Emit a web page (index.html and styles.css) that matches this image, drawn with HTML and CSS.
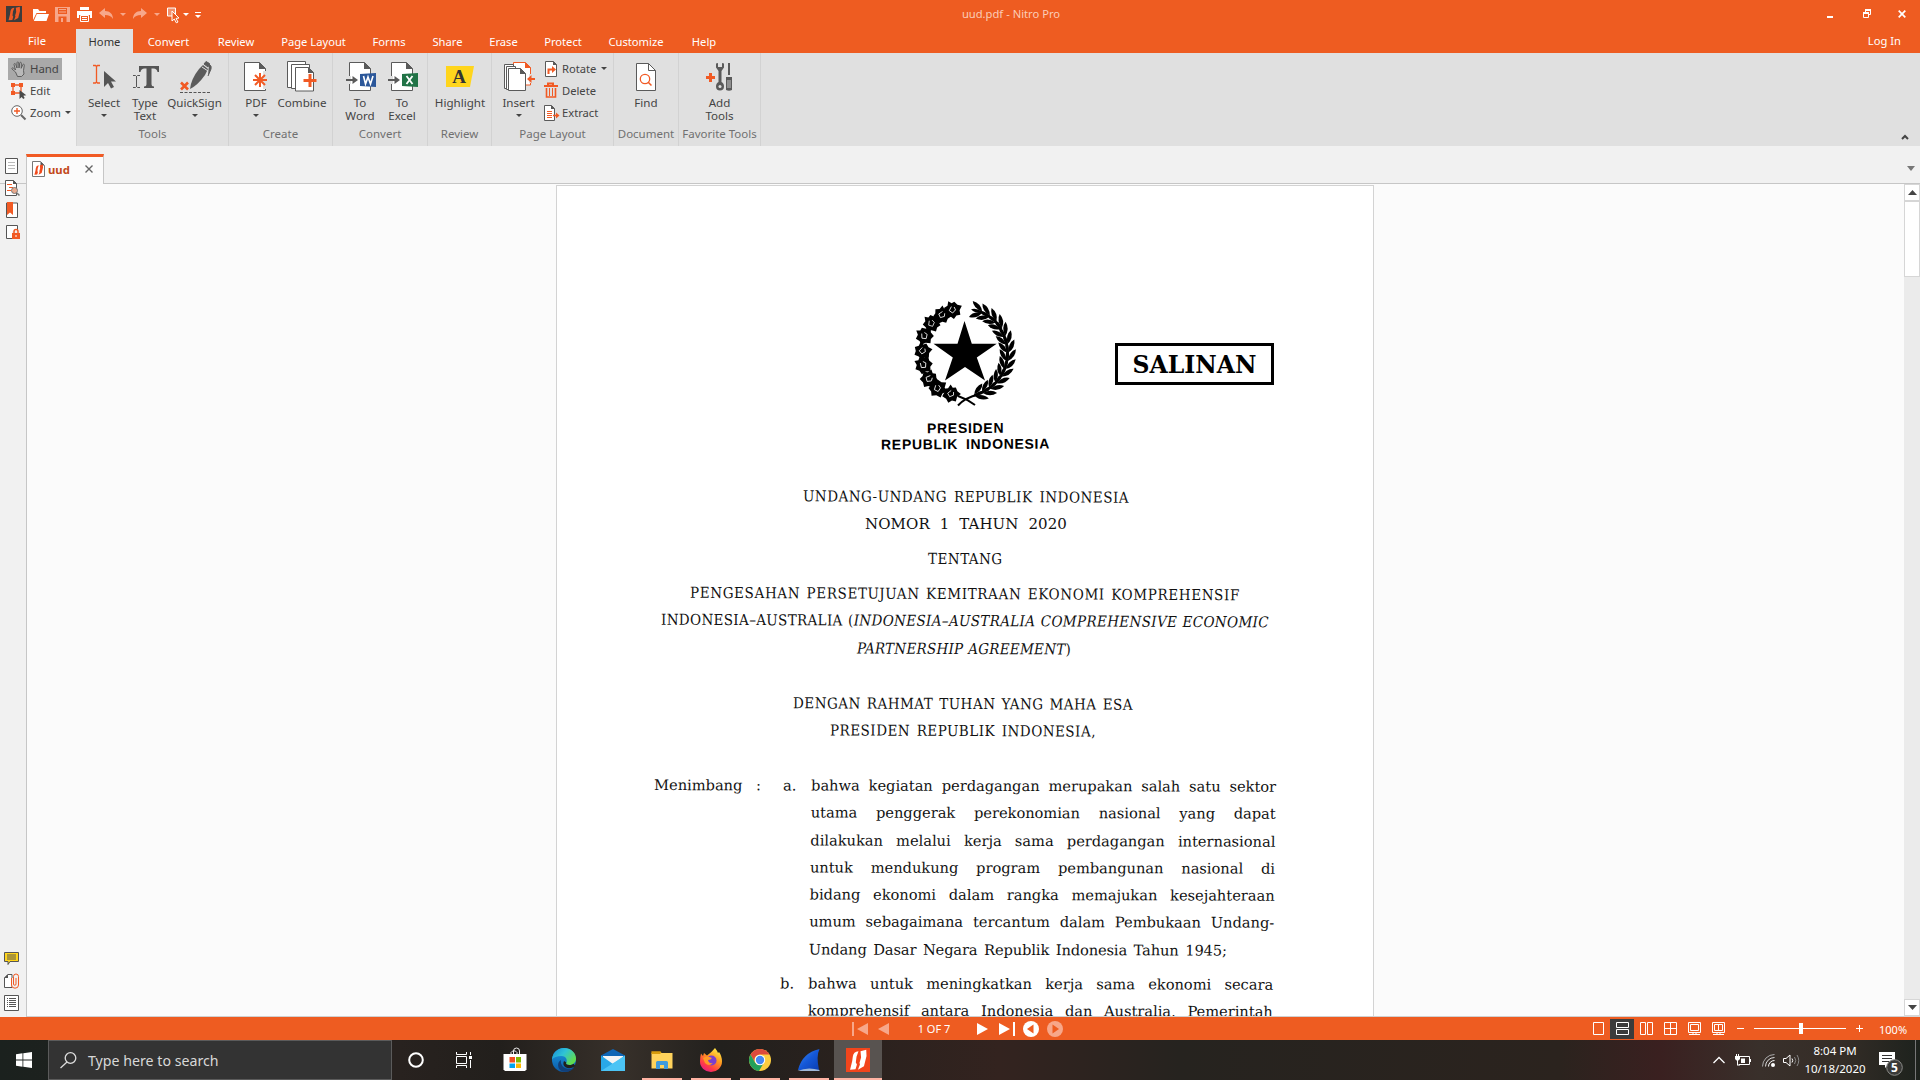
FILE: index.html
```html
<!DOCTYPE html>
<html lang="en">
<head>
<meta charset="utf-8">
<title>uud.pdf - Nitro Pro</title>
<link rel="stylesheet" href="styles.css">
</head>
<body>
<svg class="defs" width="0" height="0">
  <defs>
    <linearGradient id="edgeA" x1="0" y1="0" x2="1" y2=".6"><stop offset="0" stop-color="#1689d8"/><stop offset=".5" stop-color="#2fc3d6"/><stop offset="1" stop-color="#62dc4c"/></linearGradient>
    <linearGradient id="edgeB" x1="0" y1="0" x2="0" y2="1"><stop offset="0" stop-color="#1b9be4"/><stop offset="1" stop-color="#0c59a4"/></linearGradient>
    <linearGradient id="fox" x1=".8" y1="0" x2=".2" y2="1"><stop offset="0" stop-color="#fff04a"/><stop offset=".4" stop-color="#ff9a1f"/><stop offset=".75" stop-color="#ff3b47"/><stop offset="1" stop-color="#e2188c"/></linearGradient>
    <linearGradient id="fin" x1="0" y1="0" x2="1" y2="1"><stop offset="0" stop-color="#3f8cf0"/><stop offset=".5" stop-color="#1458d8"/><stop offset="1" stop-color="#0b3db0"/></linearGradient>
    <g id="nitro"><path d="M8.400 1.800Q4.800 2 4.400 5.500L4 8.500 2.500 14.300 6.300 14 7.300 10.800 6.500 9.500 7 5.500z"/><path d="M9.800 1.800 13.800.800 14 5 12.200 12 8 14.300 9.400 10.800 9.100 9.600 10.200 6z"/></g>
    <g id="rose"><path d="M-1-7.500 2.500-6 6.500-6.500 6-2 8 1.500 5 3.500 4 7.200 0 6-4 7-5 3.500-7.800 1-5.500-2-6.200-6-2.800-5.300z"/><path d="M-2-2.500-2.500 1.500 1 2.500 2.500-1 .5-3" fill="none" stroke="#fff" stroke-width=".7"/></g>
    <g id="grain"><path d="M.5 6.500Q8.300 3 8.300-5.500 1.500-3 .5 6.500z"/><path d="M-.8 6.500Q-8 3-8-5-1.500-3-.8 6.500z"/><path d="M-1 7Q-3-1 0-5 3-1 .7 7z"/></g>
  </defs>
</svg>

<header class="titlebar">
  <div class="quick">
    <svg class="app" width="16" height="16"><rect width="16" height="16" fill="#3d3c3c"/><use href="#nitro" fill="#f15a24"/></svg>
    <svg class="q-open" width="16" height="14"><path d="M0 12V1h5l1.500 2H13v2H3.500z" fill="#fff"/><path d="M3.800 6H16l-2.500 7H.8z" fill="#fff"/></svg>
    <svg class="q-save" width="15" height="15"><path d="M0 0h15v15H0z" fill="#f7a78a"/><path d="M3 1h9v6H3zM3.500 9.500h8V15h-8z" fill="#ee5c21"/><path d="M4 2h7v1H4zM4 4.500h7v1H4zM6 11h2v4H6z" fill="#f7a78a"/></svg>
    <svg class="q-print" width="15" height="15"><path d="M3 0h9v3H3zM0 4h15v7h-2V8H2v3H0z" fill="#fff"/><path d="M3.500 8.500h8v6h-8z" fill="#ee5c21" stroke="#fff"/><path d="M5 10.500h5M5 12.500h5" stroke="#fff"/></svg>
    <svg class="q-undo" width="15" height="12"><path d="M6 0v3c5 0 8 3 8 8-2-3-4-4-8-4v3L0 5z" fill="#f7a78a"/></svg>
    <i class="dn faded q-a1"></i>
    <svg class="q-redo" width="15" height="12"><path d="M9 0v3C4 3 1 6 1 11c2-3 4-4 8-4v3l6-5z" fill="#f7a78a"/></svg>
    <i class="dn faded q-a2"></i>
    <svg class="q-cur" width="13" height="17"><path d="M.5 1h8v8h-8z" fill="#f2906b" stroke="#fff"/><path d="M5 4v10l2.300-2 2 3.800 1.700-.8-2-3.600 3-.4z" fill="#ee5c21" stroke="#fff"/></svg>
    <i class="dn white q-a3"></i>
    <svg class="q-more" width="6" height="6"><path d="M0 0h6v1H0zM0 3h6L3 6z" fill="#fff"/></svg>
  </div>
  <div class="caption">uud.pdf - Nitro Pro</div>
  <div class="winbtns">
    <svg width="6" height="10"><path d="M0 7h6v2H0z" fill="#fff"/></svg>
    <svg width="8" height="9"><path d="M2.500 3V1h5v4.500H6" fill="none" stroke="#fff"/><path d="M2 0h6v2H2z" fill="#fff"/><path d="M.5 4h5v4.500h-5z" fill="none" stroke="#fff"/><path d="M0 3h6v2H0z" fill="#fff"/></svg>
    <svg width="8" height="8"><path d="M.7.700l6.600 6.600M7.300.700.7 7.300" stroke="#fff" stroke-width="1.700"/></svg>
  </div>
</header>

<nav class="menu">
  <span class="file">File</span><span class="on">Home</span><span>Convert</span><span>Review</span><span>Page Layout</span><span>Forms</span><span>Share</span><span>Erase</span><span>Protect</span><span>Customize</span><span>Help</span>
  <span class="login">Log In</span>
</nav>

<section class="ribbon">
  <div class="modes">
    <div class="mode sel"><svg width="16" height="16"><path d="M4.500 11 1 8c-.5-1 .6-1.600 1.500-1L4.500 9 3 3.500C3 2.300 4.300 2.200 4.700 3.300L6 7V1.800C6 .600 7.600.600 7.700 1.800L8 7l.8-5C9 1 10.300 1 10.400 2.200L10.200 7.300l1.600-3.600c.5-1 1.700-.5 1.500.5L12.500 9.500 13 13l-2.500 2.500h-4z" fill="#b9b9b9" stroke="#555" stroke-width=".9"/></svg>Hand</div>
    <div class="mode"><svg width="16" height="16"><path d="M2 2h8v8H2z" fill="none" stroke="#f15a24" stroke-width="1.300"/><path d="M0 0h4v4H0zM8 0h4v4H8zM0 8h4v4H0z" fill="#f15a24"/><path d="M8.500 7v9l2.200-2 1.500 2 1.500-1-1.400-2.200 3-.5z" fill="#4a4a4a"/></svg>Edit</div>
    <div class="mode"><svg width="16" height="16"><circle cx="6" cy="6" r="5.300" fill="#fff" stroke="#666"/><path d="M10 10l4.500 4.500" stroke="#666" stroke-width="2"/><path d="M6 3v6M3 6h6" stroke="#f15a24" stroke-width="1.400"/></svg>Zoom<i class="dn"></i></div>
  </div>

  <div class="group g-tools"><div class="btns">
    <div class="btn"><svg width="48" height="36"><path d="M13 7.500h2.500l1 1 1-1H20M13 25h2.500l1-1 1 1H20M16.500 8v16.500" stroke="#f15a24" fill="none" stroke-width="1.300"/><path d="M24 13v16l4-4 3 5.500 3-1.500-3-5.500h5z" fill="#555"/></svg><b>Select</b><i class="dn"></i></div>
    <div class="btn"><svg width="48" height="36"><path d="M18 8h20v6h-1.500q-.5-3.500-4-3.500h-2V26q0 2.500 2.500 2.500V30H23v-1.500q2.500 0 2.500-2.500V10.500h-2q-3.500 0-4 3.500H18z" fill="#555"/><path d="M12 17.500h2.500l1 1 1-1H19M12 29.500h2.500l1-1 1 1H19M15.500 18v11" stroke="#555" fill="none"/></svg><b>Type<br>Text</b></div>
    <div class="btn"><svg width="48" height="36"><path d="M19 31Q20 21 28 11l4-4 5 4-3 6Q27 27 19 31z" fill="#5b5b5b"/><path d="M33 6l2-2.500 3.500 2L37 9zM38 6q3 2 2 5l-3 7" fill="#5b5b5b" stroke="#5b5b5b"/><path d="M31 9l6 4" stroke="#e0e0e0"/><path d="M10 24.500l7 7M17 24.500l-7 7" stroke="#f15a24" stroke-width="2.600"/><path d="M9 34.500h31" stroke="#555" stroke-dasharray="3 1.500"/></svg><b>QuickSign</b><i class="dn"></i></div>
  </div><em>Tools</em></div>

  <div class="group g-create"><div class="btns">
    <div class="btn"><svg width="48" height="36"><path d="M12.500 4.500h15l6 6v22h-21z" fill="#fff" stroke="#5a5a5a"/><path d="M27 4v7h7z" fill="#5a5a5a"/><path d="M31 13h5v18h-5z" fill="#e0e0e0"/><path d="M28 15v14M21 22h14M23 17l10 10M33 17 23 27" stroke="#f15a24" stroke-width="2"/></svg><b>PDF</b><i class="dn"></i></div>
    <div class="btn"><svg width="48" height="36"><path d="M9.500 3.500h18v26h-18z" fill="#fff" stroke="#5a5a5a"/><path d="M13.500 6.500h18v24h-18z" fill="#fff" stroke="#5a5a5a"/><path d="M17.500 9.500h13l5 5v18.500h-18z" fill="#fff" stroke="#5a5a5a"/><path d="M30 9v6h6z" fill="#5a5a5a"/><path d="M32 16v13M25.500 22.500h13" stroke="#f15a24" stroke-width="3"/></svg><b>Combine</b></div>
  </div><em>Create</em></div>

  <div class="group g-convert"><div class="btns">
    <div class="btn"><svg width="48" height="36"><path d="M13.500 4.500h15l6 6v22h-21z" fill="#fff" stroke="#5a5a5a"/><path d="M28 4v7h7z" fill="#5a5a5a"/><path d="M12 18h3v8h-3z" fill="#e0e0e0"/><path d="M10 22h8" stroke="#5a5a5a" stroke-width="2"/><path d="M16.500 18v8l5.500-4z" fill="#5a5a5a"/><path d="M24 16l16-1v14l-16-1z" fill="#2b579a"/><path d="M27.500 18l2 8 2.500-7 2.500 7 2.500-8" fill="none" stroke="#fff" stroke-width="1.600"/></svg><b>To<br>Word</b></div>
    <div class="btn"><svg width="48" height="36"><path d="M13.500 4.500h15l6 6v22h-21z" fill="#fff" stroke="#5a5a5a"/><path d="M28 4v7h7z" fill="#5a5a5a"/><path d="M12 18h3v8h-3z" fill="#e0e0e0"/><path d="M10 22h8" stroke="#5a5a5a" stroke-width="2"/><path d="M16.500 18v8l5.500-4z" fill="#5a5a5a"/><path d="M24 16l16-1v14l-16-1z" fill="#217346"/><path d="M28.500 18l6 8M34.500 18l-6 8" fill="none" stroke="#fff" stroke-width="1.800"/></svg><b>To<br>Excel</b></div>
  </div><em>Convert</em></div>

  <div class="group g-review"><div class="btns">
    <div class="btn"><svg width="48" height="36"><path d="M10 8h28l-4 21H10z" fill="#ffd51c"/><text x="23" y="25" text-anchor="middle" class="hl">A</text></svg><b>Highlight</b></div>
  </div><em>Review</em></div>

  <div class="group g-page"><div class="btns">
    <div class="btn"><svg width="48" height="36"><path d="M18.500 16V4.500h12l5 5V27H28" fill="#fff" stroke="#f15a24"/><path d="M30 4v6h6z" fill="#f15a24"/><path d="M9.500 6.500h9v24h-9z" fill="#fff" stroke="#5a5a5a"/><path d="M11.500 8.500h9v23h-9z" fill="#fff" stroke="#5a5a5a"/><path d="M13.500 10.500h12l5 5v17h-17z" fill="#fff" stroke="#5a5a5a"/><path d="M25 10v6h6z" fill="#5a5a5a"/><path d="M34 16h4v9h-4z" fill="#e0e0e0"/><path d="M35 21h5" stroke="#f15a24" stroke-width="2"/><path d="M36.500 17v8L32 21z" fill="#f15a24"/></svg><b>Insert</b><i class="dn"></i></div>
    <div class="stack">
      <div><svg width="16" height="16"><path d="M2.500.500h8l3 3v12h-11z" fill="#fff" stroke="#5a5a5a"/><path d="M10 0v4h4z" fill="#5a5a5a"/><path d="M5.500 13V8.500H10" fill="none" stroke="#f15a24" stroke-width="2"/><path d="M9 5v7l4-3.500z" fill="#f15a24"/></svg>Rotate<i class="dn"></i></div>
      <div><svg width="16" height="16"><path d="M5 2V.500h5V2M1 3h14" fill="none" stroke="#f15a24" stroke-width="2"/><path d="M3.500 5v9h9V5" fill="none" stroke="#f15a24" stroke-width="1.600"/><path d="M6.500 5v8M9.500 5v8" stroke="#f15a24"/></svg>Delete</div>
      <div><svg width="16" height="16"><path d="M1.500.500h7l3 3v12h-10z" fill="#fff" stroke="#5a5a5a"/><path d="M8 0v4h4z" fill="#5a5a5a"/><path d="M4 6.500h5M4 8.500h5M4 10.500h5M4 12.500h5" stroke="#f15a24"/><path d="M10 10.500h4" stroke="#f15a24" stroke-width="1.600"/><path d="M13 7.500v6l3.500-3z" fill="#f15a24"/></svg>Extract</div>
    </div>
  </div><em>Page Layout</em></div>

  <div class="group g-doc"><div class="btns">
    <div class="btn"><svg width="48" height="36"><path d="M14.500 5.500h12l7 7v20h-19z" fill="#fff" stroke="#5a5a5a"/><path d="M26.500 5.500v7h7" fill="none" stroke="#5a5a5a"/><circle cx="23" cy="21" r="4.700" fill="none" stroke="#f15a24" stroke-width="1.300"/><path d="M26 24l3.500 3.500" stroke="#f15a24" stroke-width="1.500"/></svg><b>Find</b></div>
  </div><em>Document</em></div>

  <div class="group g-fav"><div class="btns">
    <div class="btn"><svg width="48" height="36"><path d="M10 19.500h9M14.500 15v9" stroke="#f15a24" stroke-width="3"/><path d="M20 5.500v4l2.500 3.500v11q-2.500 1-2.500 4.500 0 4 4 4t4-4q0-3.500-2.500-4.500V13L28 9.500v-4l-2-.5v4h-4V5z" fill="#5a5a5a"/><circle cx="24" cy="28.500" r="1.500" fill="#e0e0e0"/><path d="M32 5h2v12h-2z" fill="#5a5a5a"/><path d="M30 19h6v13q-3 1.500-6 0z" fill="#5a5a5a"/><path d="M32 22v8M34 22v8" stroke="#e0e0e0" stroke-width=".8"/></svg><b>Add<br>Tools</b></div>
  </div><em>Favorite Tools</em></div>
  <svg class="collapse" width="8" height="6"><path d="M1 5l3-3 3 3" fill="none" stroke="#444" stroke-width="2"/></svg>
</section>

<div class="tabstrip">
  <div class="doctab">
    <svg width="13" height="16"><path d="M.5.500h8l4 4v11H.5z" fill="#fff" stroke="#777"/><path d="M8.500.500v4h4z" fill="#555"/><use href="#nitro" transform="translate(.5 3) scale(.75 .75)" fill="#f04a1c"/></svg>
    <span>uud</span>
    <svg class="x" width="8" height="8"><path d="M.5.500l7 7M7.500.500l-7 7" stroke="#666" stroke-width="1.400"/></svg>
  </div>
  <i class="dn big"></i>
</div>

<main class="work">
  <aside class="side">
    <svg width="16" height="16"><path d="M1.500.500h12v15h-12z" fill="#fff" stroke="#555"/><path d="M4 4.500h7M4 7.500h7M4 10.500h7" stroke="#bbb"/></svg>
    <svg width="16" height="16"><path d="M1.500.500h8l3 3v12h-11z" fill="#fff" stroke="#555"/><path d="M9 0v4h4z" fill="#555"/><path d="M3 4.500h5M5 7.500h4M3 10.500h4" stroke="#f15a24" stroke-width="1.200"/><circle cx="10.500" cy="10.500" r="3" fill="#e8a98c" stroke="#777"/><path d="M13 13l2.500 2.500" stroke="#777" stroke-width="1.500"/></svg>
    <svg width="16" height="16"><path d="M2.500 1v14.500h11V1z" fill="#fff" stroke="#555"/><path d="M3 0h6v13l-3-2.500L3 13z" fill="#f15a24"/></svg>
    <svg width="16" height="16"><path d="M2.500 1.500h11v13h-11z" fill="#fff" stroke="#555"/><path d="M8 7h8v9H8z" fill="#f1f1f1"/><path d="M8 9h8v6H8z" fill="#f15a24"/><path d="M10 9V7.500a2 2 0 0 1 4 0V9" fill="none" stroke="#f15a24" stroke-width="1.500"/><path d="M12 11v2" stroke="#fff"/></svg>
    <svg class="lower" width="16" height="16"><path d="M.5 1.500h14v9H6l-2 3v-3H.5z" fill="#ffd51c" stroke="#555"/><path d="M3 4h9M3 6h9M3 8h9" stroke="#555"/></svg>
    <svg width="16" height="16"><path d="M.5 14.500V5L4 1.500h4v13z" fill="#fff" stroke="#555"/><path d="M0 5l4-4v4z" fill="#555"/><path d="M7.500 5v7a3.500 3.200 0 0 0 7 0V3.500a2.500 2.500 0 0 0-5 0V11a1.200 1.200 0 0 0 2.500 0V5" fill="#f1f1f1" stroke="#f15a24"/></svg>
    <svg width="16" height="16"><path d="M.5.500h14v15H.5z" fill="#fff" stroke="#555"/><path d="M3 3.500h1m1 0h7M3 5.500h1m1 0h7M3 7.500h1m1 0h7M3 9.500h1m1 0h7M3 11.500h1m1 0h7" stroke="#555"/></svg>
  </aside>
  <div class="canvas">
    <article class="page">
      <div class="crest">
        <svg width="102" height="105" viewBox="0 0 102 105">
          <path d="M49.500 19 56.800 41.800 81.700 41.800 61.800 55.500 70 78.500 50 65 30 78.500 37.800 55.500 18.500 41.800 42.500 41.800z"/>
          <use href="#rose" transform="translate(37.500 8) rotate(20) scale(1.120)"/><use href="#rose" transform="translate(26.800 13) rotate(50) scale(1.100)"/><use href="#rose" transform="translate(16.500 21.500) scale(1.120)"/><use href="#rose" transform="translate(9.500 34) rotate(-10) scale(1.150)"/><use href="#rose" transform="translate(7.500 49) rotate(35) scale(1.100)"/><use href="#rose" transform="translate(8.500 63) rotate(-20) scale(1.150)"/><use href="#rose" transform="translate(14 77) rotate(60) scale(1.150)"/><use href="#rose" transform="translate(22.500 86.500) rotate(10) scale(1.150)"/><use href="#rose" transform="translate(35.800 92) rotate(45) scale(1.100)"/>
          <g transform="translate(49.500 51)">
            <use href="#grain" transform="rotate(-75) translate(44 0)"/><use href="#grain" transform="rotate(-64) translate(44 0)"/><use href="#grain" transform="rotate(-53) translate(44 0)"/><use href="#grain" transform="rotate(-42) translate(44 0)"/><use href="#grain" transform="rotate(-31) translate(43 0)"/><use href="#grain" transform="rotate(-20) translate(43 0)"/><use href="#grain" transform="rotate(-9) translate(43 0)"/><use href="#grain" transform="rotate(2) translate(43 0)"/><use href="#grain" transform="rotate(13) translate(43 0)"/><use href="#grain" transform="rotate(24) translate(43 0)"/><use href="#grain" transform="rotate(35) translate(43 0)"/><use href="#grain" transform="rotate(46) translate(43 0)"/><use href="#grain" transform="rotate(57) translate(43 0)"/><use href="#grain" transform="rotate(68) translate(43 0)"/>
          </g>
          <path d="M43 94q9 3 17 9M43 103.500q7-8 21-11" fill="none" stroke="#000" stroke-width="2"/>
        </svg>
        <div class="stamp">SALINAN</div>
      </div>
      <p class="seal s1">PRESIDEN</p>
      <p class="seal s2">REPUBLIK INDONESIA</p>
      <p class="h h1">UNDANG-UNDANG REPUBLIK INDONESIA</p>
      <p class="h h2">NOMOR 1 TAHUN 2020</p>
      <p class="h h3">TENTANG</p>
      <p class="h h4">PENGESAHAN PERSETUJUAN KEMITRAAN EKONOMI KOMPREHENSIF</p>
      <p class="h h5">INDONESIA–AUSTRALIA (<i>INDONESIA–AUSTRALIA COMPREHENSIVE ECONOMIC</i></p>
      <p class="h h6"><i>PARTNERSHIP AGREEMENT</i>)</p>
      <p class="h h7">DENGAN RAHMAT TUHAN YANG MAHA ESA</p>
      <p class="h h8">PRESIDEN REPUBLIK INDONESIA,</p>
      <div class="clause">
        <span class="lead">Menimbang</span><span>:</span><span>a.</span>
        <div class="lines">
          <p>bahwa kegiatan perdagangan merupakan salah satu sektor</p>
          <p>utama penggerak perekonomian nasional yang dapat</p>
          <p>dilakukan melalui kerja sama perdagangan internasional</p>
          <p>untuk mendukung program pembangunan nasional di</p>
          <p>bidang ekonomi dalam rangka memajukan kesejahteraan</p>
          <p>umum sebagaimana tercantum dalam Pembukaan Undang-</p>
          <p class="last">Undang Dasar Negara Republik Indonesia Tahun 1945;</p>
        </div>
      </div>
      <div class="clause second">
        <span></span><span></span><span>b.</span>
        <div class="lines">
          <p>bahwa untuk meningkatkan kerja sama ekonomi secara</p>
          <p>komprehensif antara Indonesia dan Australia, Pemerintah</p>
        </div>
      </div>
    </article>
  </div>
  <div class="scroll">
    <div class="sb"><svg width="9" height="5"><path d="M0 5 4.500 0 9 5z" fill="#444"/></svg></div>
    <div class="thumb"></div>
    <div class="sb end"><svg width="9" height="5"><path d="M0 0 4.500 5 9 0z" fill="#444"/></svg></div>
  </div>
</main>

<div class="status">
  <div class="pager">
    <svg class="dim" width="17" height="14"><path d="M0 0h2v14H0zM16 1v12L5 7z"/></svg>
    <svg class="dim" width="11" height="14"><path d="M11 1v12L0 7z"/></svg>
    <span>1 OF 7</span>
    <svg width="11" height="14"><path d="M0 1v12l11-6z"/></svg>
    <svg width="16" height="14"><path d="M0 1v12l11-6zM14 0h2v14h-2z"/></svg>
    <svg width="16" height="16"><circle cx="8" cy="8" r="8"/><path d="M10.500 3.500v9L4 8z" fill="#ee5c21"/></svg>
    <svg class="dim" width="16" height="16"><circle cx="8" cy="8" r="8"/><path d="M5.500 3.500v9L12 8z" fill="#ee5c21"/></svg>
  </div>
  <div class="views">
    <div><svg width="13" height="13"><path d="M1.500.500h10v12h-10z"/></svg></div>
    <div class="on"><svg width="13" height="13"><path d="M.5.500h12v5H.5zM.5 7.500h12v5H.5z"/></svg></div>
    <div><svg width="13" height="13"><path d="M.5.500h5v12h-5zM7.500.500h5v12h-5z"/></svg></div>
    <div><svg width="13" height="13"><path d="M.5.500h12v12H.5zM6.500 0v13M0 6.500h13"/></svg></div>
    <div><svg width="13" height="13"><path d="M.5.500h12v10H.5zM2.500 2.500h8v6h-8zM5 10.500v2M8 10.500v2M1 12.500h11"/></svg></div>
    <div><svg width="13" height="13"><path d="M.5.500h12v10H.5zM2.500 2.500h8v6h-8zM6.500 2.500v6M5 10.500v2M8 10.500v2M1 12.500h11"/></svg></div>
  </div>
  <svg class="slider" width="127" height="12"><path d="M0 5h7v1H0zM17 5h92v1H17zM62 0h4v11h-4zM119 5h7v1h-7zM122 2h1v7h-1z"/></svg>
  <span class="pct">100%</span>
</div>

<footer class="taskbar">
  <div class="start"><svg width="16" height="16"><path d="M0 2.200 6.500 1.300v6.200H0zM7.300 1.200 16 0v7.500H7.300zM0 8.400h6.500v6.300L0 13.800zM7.300 8.400H16V16l-8.700-1.200z" fill="#fff"/></svg></div>
  <div class="search"><svg width="17" height="17"><circle cx="10.500" cy="6" r="5.300" fill="none" stroke="#ddd" stroke-width="1.300"/><path d="M7 10 .5 16" stroke="#ddd" stroke-width="1.300"/></svg>Type here to search</div>
  <div class="cell sys"><svg width="16" height="16"><circle cx="8" cy="8" r="6.800" fill="none" stroke="#fff" stroke-width="2"/></svg></div>
  <div class="cell sys"><svg width="16" height="16"><path d="M.5 0v2.500h10V0M.5 16v-2.500h10V16M.5 4.500h10v7H.5zM14.500 0v3M14.500 8v8" fill="none" stroke="#fff"/><path d="M13 4h3v3h-3z" fill="#fff"/></svg></div>
  <div class="cell store"><svg width="24" height="24"><path d="M8 7V4.500a3.500 3.500 0 0 1 6 0V7M10.500 7V3a3 3 0 0 1 6 0v4" fill="none" stroke="#eee"/><path d="M.5 6h23v15.500L22 23H2L.5 21.500z" fill="#fff"/><path d="M6.500 9H12v5.500H6.500z" fill="#f25022"/><path d="M13 9h5v5.500h-5z" fill="#7fba00"/><path d="M6.500 15.500H12V20H6.500z" fill="#00a4ef"/><path d="M13 15.500h5V20h-5z" fill="#ffb900"/></svg></div>
  <div class="cell"><svg width="24" height="24"><circle cx="12" cy="12" r="12" fill="url(#edgeB)"/><path d="M0 11.500C1 4 6 0 12 0c7 0 12 5 12 10.500 0 4-3 6.500-6.500 6.500-3 0-4-1.300-3.200-2.500C15.500 12.500 14.500 8 9.500 8 5 8 1.500 9.500 0 11.500z" fill="url(#edgeA)"/><path d="M9 12c-1 5 3 9 8 9 2 0 3.500-.5 5.300-1.800-3 5-9 5.300-12.300 4C5 21 5 14 9 12z" fill="#123f78"/><path d="M14.300 14.500c-.8 1.200.2 2.500 3.200 2.500 1.600 0 3-.3 4.200-1.200l1.500 2.200q-5 3.500-9.200 1.500-4-2.500-2-6.500z" fill="#211f1c"/></svg></div>
  <div class="cell"><svg width="24" height="24"><path d="M0 7.500 12 1l12 6.500V12H0z" fill="#0f65b5"/><path d="M2 8h20v9H2z" fill="#f4f4f4"/><path d="M0 7.500 12 16 24 7.500V23H0z" fill="#29a8e8"/><path d="M0 23 24 7.500V23z" fill="#4cc4f5"/></svg></div>
  <div class="cell run"><svg width="24" height="24"><path d="M1.500 4.500v-1h9l1.500 2z" fill="#e0a010"/><path d="M1.500 5h21v15.500h-21z" fill="#ffd35c"/><path d="M1.500 3.500h9V6h-9z" fill="#d79c0c"/><path d="M6 21v-6.500Q6 13 7.500 13h9q1.500 0 1.500 1.500V21h-4v-4h-4v4z" fill="#3f9bdc"/></svg></div>
  <div class="cell run"><svg width="24" height="24"><path d="M2 5.500 4 8l1-3 3 2.500Q12 5 16 0q2 2.500 3 5l1-1q3 4 3 9.500A11 10.500 0 0 1 1 13.500Q1 9 2 5.500z" fill="url(#fox)"/><circle cx="12.500" cy="12.500" r="5" fill="#7a3fd0"/><path d="M4 10q4-3 9 0-1 2-4 2 1 4 5 3-4 4-8 0z" fill="#ff9a26"/></svg></div>
  <div class="cell run"><svg width="24" height="24"><circle cx="12" cy="12" r="11" fill="#fccd3f"/><path d="M2.500 6.500A11 11 0 0 1 21.500 6.500H12A5.500 5.500 0 0 0 7 14.500z" fill="#dc4a3d"/><path d="M2.500 6.500A11 11 0 0 0 11 23l5-8.500q-6 5-9 0z" fill="#22a05b"/><circle cx="12" cy="12" r="5.200" fill="#fff"/><circle cx="12" cy="12" r="4.200" fill="#4688f1"/></svg></div>
  <div class="cell run"><svg width="24" height="24"><path d="M1 22Q5 5 22.500 1q-3.500 7-.5 21z" fill="url(#fin)"/><path d="M.5 23q10-4.500 22-1v1z" fill="#9fb8d8"/></svg></div>
  <div class="cell run active"><svg width="24" height="24"><path d="M0 0h24v24H0z" fill="#f2451c"/><use href="#nitro" transform="translate(.5 .5) scale(1.430 1.480)" fill="#fff"/></svg></div>
  <div class="tray">
    <svg width="12" height="8"><path d="M.5 7 6 1.500 11.500 7" fill="none" stroke="#fff" stroke-width="1.300"/></svg>
    <svg class="bat" width="16" height="12"><path d="M5 2.500h9.500v8H4" fill="none" stroke="#fff"/><path d="M15 5h1v3h-1zM6 4.500h4V9H6zM0 2h5v3L3.500 6.500h-2L0 5zM1 0h1v2H1zM3 0h1v2H3zM2 6h1v4.500h2v1H2z" fill="#fff"/></svg>
    <svg class="wifi" width="13" height="13"><g fill="none" stroke="#aaa"><path d="M.5 12.500A12 12 0 0 1 12.500.500" /><path d="M3.500 12.500a9 9 0 0 1 9-9" stroke="#ddd"/><path d="M6.500 12.500a6 6 0 0 1 6-6" stroke="#fff"/></g><circle cx="11" cy="11" r="2" fill="#fff"/></svg>
    <svg class="vol" width="17" height="13"><path d="M.5 4.500H3l4-3.500v11L3 8.500H.5z" fill="none" stroke="#fff"/><path d="M9 4.500q1.500 2 0 4" fill="none" stroke="#fff"/><path d="M11.500 3q2.500 3.500 0 7M14 1q3.500 5.500 0 11" fill="none" stroke="#888"/></svg>
    <div class="clock">8:04 PM<br>10/18/2020</div>
    <svg class="note" width="26" height="25"><path d="M0 0h16v13H9l-3 3v-3H0z" fill="#fff"/><path d="M3 3.500h10M3 6.500h10M3 9.500h7" stroke="#333"/><circle cx="15.500" cy="15.500" r="7.800" fill="#3a3a38" stroke="#8b8b88"/><text x="15.500" y="20" text-anchor="middle" class="badge">5</text></svg>
    <i class="peek"></i>
  </div>
</footer>
</body>
</html>
```
FILE: styles.css
```css
* { box-sizing: border-box; }
html, body { margin: 0; height: 100%; overflow: hidden; }
body {
  display: flex; flex-direction: column; width: 1920px; height: 1080px;
  font-family: "Noto Sans", "Open Sans", sans-serif; font-size: 11.5px; color: #444; background: #f1f1f1;
}
svg { display: block; flex: none; overflow: visible; }
.defs { position: absolute; }
p { margin: 0; }

.dn { width: 0; height: 0; border: 3px solid transparent; border-top-color: #444; border-bottom: 0; flex: none; }
.dn.white { border-top-color: #fff; }
.dn.faded { border-top-color: #f7a78a; }
.dn.big { border-width: 5px 4.500px 0; border-top-color: #777; }

/* title bar */
.titlebar { display: grid; grid-template-columns: 811px 400px 1fr; height: 29px; background: #ee5c21; flex: none; }
.quick { display: flex; align-items: center; padding-left: 6px; padding-bottom: 1px; }
.q-open { margin-left: 11px; margin-top: 2px; }
.q-save, .q-print { margin-left: 6px; margin-top: 1px; }
.q-print { margin-left: 7px; }
.q-undo { margin-left: 7px; }
.q-a1 { margin-left: 6px; }
.q-redo { margin-left: 6px; }
.q-a2 { margin-left: 7px; }
.q-cur { margin-left: 7px; margin-top: 2px; }
.q-a3 { margin-left: 3px; }
.q-more { margin-left: 6px; margin-top: 2px; }
.caption { text-align: center; line-height: 28px; color: #fbcdb8; font-size: 11.200px; }
.winbtns { display: flex; justify-content: flex-end; align-items: center; gap: 29px; padding: 0 14px 2px 0; }
.winbtns svg:first-child { margin-right: 1px; }
.winbtns svg:last-child { margin-left: -2px; }

/* menu tabs */
.menu {
  display: grid; grid-template-columns: 76px 57px 71px 64px 91px 60px 57px 55px 64px 82px 54px 1fr;
  height: 24px; flex: none; background: #ee5c21; color: #fff; text-align: center; line-height: 26px; white-space: nowrap; font-size: 11.200px;
}
.menu .file { line-height: 24px; padding-right: 2px; }
.menu .on { background: #e0e0e0; color: #333; }
.menu .login { text-align: right; padding-right: 19px; line-height: 23px; }

/* ribbon */
.ribbon { position: relative; display: flex; height: 93px; flex: none; background: #e0e0e0; white-space: nowrap; }
.modes { width: 77px; background: #f1f1f1; padding: 5px 0 0 8px; border-right: 1px solid #d6d6d6; }
.mode { display: flex; align-items: center; height: 22px; width: 54px; padding: 0 0 1px 3px; gap: 3px; font-size: 11.400px; }
.mode.sel { background: #a9a9a9; }
.mode .dn { margin-left: 1px; }
.group { display: flex; flex-direction: column; justify-content: space-between; padding: 5px 0 4px; border-right: 1px solid #d2d2d2; }
.group em { font-style: normal; text-align: center; line-height: 16px; color: #707070; }
.btns { display: grid; padding-left: 1px; }
.btn { display: flex; flex-direction: column; align-items: center; }
.btn b { font-weight: 400; font-size: 11.600px; line-height: 13px; text-align: center; margin-top: 2px; }
.btn .dn { margin-top: 5px; }
.g-tools { width: 152px; } .g-tools .btns { grid-template-columns: 54px 28px 71px; padding-left: 0; }
.g-create { width: 104px; } .g-create .btns { grid-template-columns: 54px 38px; padding-left: 0; }
.g-convert { width: 95px; } .g-convert .btns { grid-template-columns: 52px 32px; }
.g-review { width: 64px; }
.g-page { width: 122px; } .g-page .btns { grid-template-columns: 51px 69px; }
.g-doc { width: 65px; } .g-doc .btns { padding-left: 0; }
.g-fav { width: 82px; } .g-fav .btns { padding-left: 0; }
.stack { margin-left: -1px; }
.stack div { display: flex; align-items: center; gap: 3px; height: 22px; font-size: 11.200px; padding-bottom: 1px; }
.stack .dn { margin-left: 2px; }
.hl { font: bold 19px "Liberation Serif", serif; fill: #333; }
.collapse { position: absolute; left: 1901px; top: 81px; }

/* document tabs */
.tabstrip { display: flex; align-items: flex-end; justify-content: space-between; height: 38px; flex: none; padding: 0 5px 0 26px; border-bottom: 1px solid #c6c6c6; }
.doctab { display: flex; align-items: center; width: 78px; height: 30px; margin-bottom: -1px; padding: 0 10px 3px 5px; background: #fbfbfb; border: solid #c6c6c6; border-width: 0 1px; border-top: 3px solid #f15a24; font-weight: 700; color: #c2481a; }
.doctab span { margin-left: 3px; flex: 1; font-size: 11.300px; }
.tabstrip .big { margin-bottom: 12px; }

/* work area */
.work { display: flex; height: 833px; flex: none; }
.side { width: 27px; border-right: 1px solid #c6c6c6; padding: 0 0 6px 4px; display: flex; flex-direction: column; gap: 6px; margin-top: -26px; }
.side .lower { margin-top: auto; }
.canvas { width: 1877px; background: #fbfbfb; overflow: hidden; border-bottom: 1px solid #d0d0d0; padding: 1px 0 0 529px; }
.page { width: 818px; height: 1100px; background: #fff; border: 1px solid #d3d3d3; color: #111; padding: 116px 0 0; }
.scroll { display: flex; flex-direction: column; width: 16px; background: #ebebeb; border-bottom: 1px solid #d6d6d6; }
.sb { display: flex; align-items: center; justify-content: center; height: 17px; background: #fff; border: 1px solid #d6d6d6; }
.thumb { height: 76px; background: #fff; border: 1px solid #d6d6d6; }
.end { margin-top: auto; }

/* document */
.page { font-family: "DejaVu Serif", serif; }
.crest { display: flex; align-items: flex-start; height: 105px; padding-left: 358px; }
.stamp { margin: 41px 0 0 98px; width: 159px; height: 42px; border: 3px solid #000; font-weight: 700; font-size: 23.500px; line-height: 38px; color: #000; text-align: center; letter-spacing: 0; }
.seal { font: bold 14px/14px "Liberation Sans", sans-serif; white-space: nowrap; text-align-last: justify; transform: rotate(-.3deg); color: #000; letter-spacing: .7px; }
.s1 { width: 78px; margin: 14px 0 0 370px; }
.s2 { width: 169px; margin: 2px 0 0 324px; }
.h { height: 20px; line-height: 20px; font-family: "DejaVu Serif Condensed", "DejaVu Serif", serif; font-stretch: condensed; font-size: 15px; letter-spacing: .5px; white-space: nowrap; text-align-last: justify; transform: rotate(.25deg); }
.h1 { width: 326px; margin: 36px 0 0 246px; }
.h2 { width: 202px; margin: 7px 0 0 308px; transform: none; font-family: "DejaVu Serif", serif; font-stretch: normal; letter-spacing: .1px; }
.h3 { width: 75px; margin: 15px 0 0 371px; }
.h4 { width: 550px; margin: 15px 0 0 133px; letter-spacing: .65px; }
.h5 { width: 608px; margin: 7px 0 0 104px; letter-spacing: .35px; }
.h6 { width: 214px; margin: 8px 0 0 300px; letter-spacing: .25px; }
.h7 { width: 340px; margin: 35px 0 0 236px; }
.h8 { width: 266px; margin: 7px 0 0 273px; }
.clause { display: grid; grid-template-columns: 102px 27px 28px 465px; margin: 31px 0 0 96px; font-size: 14.600px; line-height: 27.300px; transform: skew(-.8deg, .15deg); }
.lines p { height: 27.300px; white-space: nowrap; text-align-last: justify; }
.lines .last { width: 418px; letter-spacing: -.1px; }
.clause.second { margin: 7px 0 0 94px; }

/* status bar */
.status { display: flex; align-items: center; height: 23px; flex: none; background: #ee5c21; color: #fff; }
.pager { display: flex; align-items: center; width: 741px; margin-left: 852px; }
.pager svg { fill: #fff; }
.pager .dim { fill: #f7a78a; }
.pager svg:nth-child(2) { margin-left: 9px; }
.pager span { width: 88px; padding-left: 2px; text-align: center; font-size: 11px; }
.pager svg:nth-child(5) { margin-left: 11px; }
.pager svg:nth-child(6) { margin-left: 8px; }
.pager svg:nth-child(7) { margin-left: 8px; }
.views { display: flex; margin-left: -7px; }
.views div { width: 24px; height: 20px; display: flex; align-items: center; justify-content: center; }
.views .on { background: #3b3b3b; }
.views svg { fill: none; stroke: #fff; }
.slider { fill: #fff; margin-left: 7px; }
.pct { margin-left: 15px; font-size: 11px; padding-top: 2px; }

/* taskbar */
.taskbar { display: flex; height: 40px; flex: none; background: linear-gradient(90deg, #1b211e 0, #28221f 400px, #221f1c 500px, #37302a 620px, #22201d 720px, #33231f 1000px, #26231f 1180px, #2b231e 1560px, #3a2020 1660px, #39302b 1760px, #352d27 1840px, #1d221d 1920px); color: #fff; }
.start { width: 48px; padding: 12px 16px; }
.search { display: flex; align-items: center; gap: 11px; width: 344px; padding-left: 11px; background: #333; border: 1px solid #5b5b5b; color: #d8d8d8; font-size: 14.200px; }
.cell { display: flex; align-items: center; justify-content: center; width: 49px; }
.cell.sys { width: 48px; }
.cell.store { margin-left: 2px; }
.cell.run { border-bottom: 2px solid #ffb3a3; width: 40px; margin: 0 4.500px; padding-top: 2px; }
.cell.active { width: 48px; margin: 0 0 0 1px; background: #585350; }
.tray { display: flex; align-items: center; margin-left: auto; }
.bat { margin-left: 10px; }
.wifi { margin-left: 11px; }
.vol { margin-left: 8px; }
.clock { width: 64px; margin-left: 3px; text-align: center; font-size: 11.500px; line-height: 18px; white-space: nowrap; }
.note { margin-left: 12px; margin-top: 8px; }
.badge { font: bold 12px "Noto Sans", sans-serif; fill: #fff; }
.peek { width: 1px; height: 40px; margin: 0 4px 0 10px; background: #777; }
```
